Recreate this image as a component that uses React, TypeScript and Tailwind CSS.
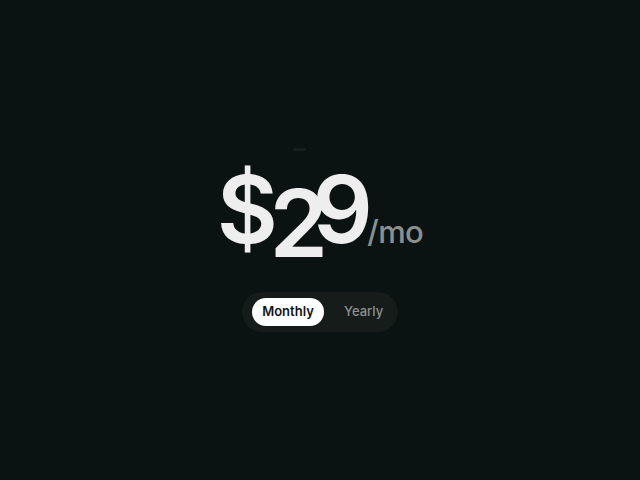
import React, { useState } from 'react';

export default function App() {
  const [period, setPeriod] = useState<'monthly' | 'yearly'>('monthly');

  return (
    <div
      className="w-full h-screen bg-[#0a1311] flex flex-col items-center justify-center pt-[14px]"
      style={{ fontFamily: 'Inter, "Noto Sans", sans-serif' }}
    >
      <div className="relative flex items-baseline">
        <div className="absolute left-[76px] -top-[14px] w-[13px] h-[3px] rounded-full bg-white/5" />
        <div className="flex items-baseline text-[94px] leading-none font-semibold tracking-[-0.09em] text-[#eeeeee]">
          <span className="inline-block">$</span>
          <span className="inline-block translate-y-[14px]">2</span>
          <span className="inline-block -ml-[7px]">9</span>
        </div>
        <span className="ml-[3px] text-[31px] leading-none font-medium tracking-[-0.02em] text-[#8b908e]">/mo</span>
      </div>

      <div className="mt-[36px] flex items-center rounded-full bg-[#151c1a] px-[10px] py-[6px]">
        <button
          onClick={() => setPeriod('monthly')}
          className={
            period === 'monthly'
              ? 'h-[28px] w-[72px] rounded-full bg-white text-[13px] font-semibold text-[#111413]'
              : 'h-[28px] w-[72px] rounded-full text-[13px] font-medium text-[#8b908e]'
          }
        >
          Monthly
        </button>
        <button
          onClick={() => setPeriod('yearly')}
          className={
            period === 'yearly'
              ? 'h-[28px] w-[64px] rounded-full bg-white text-[13px] font-semibold text-[#111413]'
              : 'h-[28px] w-[64px] rounded-full pl-[20px] text-left text-[13px] font-medium text-[#8b908e]'
          }
        >
          Yearly
        </button>
      </div>
    </div>
  );
}
